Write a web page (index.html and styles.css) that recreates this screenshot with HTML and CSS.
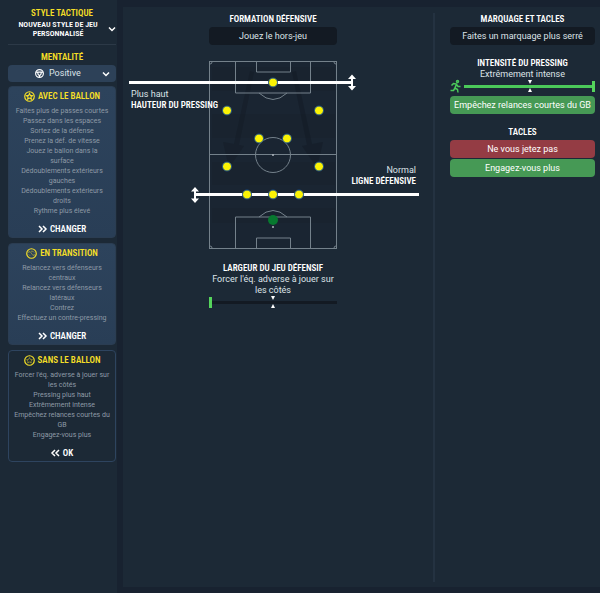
FILE: index.html
```html
<!DOCTYPE html>
<html lang="fr">
<head>
<meta charset="utf-8">
<meta name="viewport" content="width=device-width, initial-scale=1">
<title>Tactique - Sans le ballon</title>
<link rel="stylesheet" href="styles.css">
</head>
<body>
<div class="app">
  <aside class="sidebar">
    <h2 class="title accent" id="style-label">STYLE TACTIQUE</h2>
    <button class="style-picker" type="button" aria-labelledby="style-label style-value">
      <span class="title" id="style-value">NOUVEAU STYLE DE JEU PERSONNALISÉ</span>
      <svg class="chevron" viewBox="0 0 8 6" aria-hidden="true"><path d="M1 1.500 4 4.500l3-3"/></svg>
    </button>
    <label class="title accent mentality-label" for="mentality">MENTALITÉ</label>
    <div class="mentality">
      <svg class="shield" viewBox="0 0 10 10" aria-hidden="true"><circle cx="5" cy="5" r="4.3"/><path d="M1 3.500h8M3 4l.500 2L5 7.500 6.500 6 7 4M5 7.500V9"/></svg>
      <select id="mentality"><option>Positive</option></select>
      <svg class="chevron" viewBox="0 0 8 6" aria-hidden="true"><path d="M1 1.500 4 4.500l3-3"/></svg>
    </div>

    <section class="card">
      <h3 class="title accent card-title">
        <svg class="badge" viewBox="0 0 12 12" aria-hidden="true"><circle cx="6" cy="6" r="5.2"/><path d="m6 2.8 1 2 2.2.3-1.6 1.5.4 2.2-2-1.1-2 1.1.4-2.2-1.6-1.5L5 4.8z"/></svg>
        AVEC LE BALLON
      </h3>
      <ul class="notes">
        <li>Faites plus de passes courtes</li>
        <li>Passez dans les espaces</li>
        <li>Sortez de la défense</li>
        <li>Prenez la déf. de vitesse</li>
        <li>Jouez le ballon dans la surface</li>
        <li>Dédoublements extérieurs gauches</li>
        <li>Dédoublements extérieurs droits</li>
        <li>Rythme plus élevé</li>
      </ul>
      <button class="title switch" type="button">
        <svg class="arrows" viewBox="0 0 9 8" aria-hidden="true"><path d="m1 1 3 3-3 3M5 1l3 3-3 3"/></svg>
        CHANGER
      </button>
    </section>

    <section class="card">
      <h3 class="title accent card-title">
        <svg class="badge" viewBox="0 0 12 12" aria-hidden="true"><circle cx="6" cy="6" r="5.2"/><path class="dim" d="M3 5.500V4h1.500L7.500 8H9V6.500M5.500 3.500h2L9 5M3 7l1.500 1.500"/></svg>
        EN TRANSITION
      </h3>
      <ul class="notes">
        <li>Relancez vers défenseurs centraux</li>
        <li>Relancez vers défenseurs latéraux</li>
        <li>Contrez</li>
        <li>Effectuez un contre-pressing</li>
      </ul>
      <button class="title switch" type="button">
        <svg class="arrows" viewBox="0 0 9 8" aria-hidden="true"><path d="m1 1 3 3-3 3M5 1l3 3-3 3"/></svg>
        CHANGER
      </button>
    </section>

    <section class="card current">
      <h3 class="title accent card-title">
        <svg class="badge" viewBox="0 0 12 12" aria-hidden="true"><circle cx="6" cy="6" r="5.2"/><path class="dim" d="m6 2.8 1 2 2.2.3-1.6 1.5.4 2.2-2-1.1-2 1.1.4-2.2-1.6-1.5L5 4.8z"/></svg>
        SANS LE BALLON
      </h3>
      <ul class="notes">
        <li>Forcer l'éq. adverse à jouer sur les côtés</li>
        <li>Pressing plus haut</li>
        <li>Extrêmement intense</li>
        <li>Empêchez relances courtes du GB</li>
        <li>Engagez-vous plus</li>
      </ul>
      <button class="title switch" type="button">
        <svg class="arrows" viewBox="0 0 9 8" aria-hidden="true"><path d="M4 1 1 4l3 3M8 1 5 4l3 3"/></svg>
        OK
      </button>
    </section>
  </aside>

  <main class="panel">
    <section class="formation">
      <h2 class="title">FORMATION DÉFENSIVE</h2>
      <button class="option narrow" type="button">Jouez le hors-jeu</button>

      <div class="board">
        <svg class="pitch" viewBox="0 0 288 190" role="img" aria-label="Terrain">
          <rect class="grass" x="81" y="1" width="127" height="187"/>
          <g class="bands"><path d="M83 7h123v24H83zM83 54h123v24H83zM83 102h123v23H83zM83 148h123v15H83z"/></g>
          <g class="shade">
            <path d="m121 11 4 1-15 73 5 1-15 22-6-26 11 2z"/>
            <path d="m167 11-4 1 15 73-5 1 15 22 6-26-11 2z"/>
          </g>
          <g class="lines">
            <rect x="80.500" y="1.500" width="127" height="187"/>
            <path d="M81 94.500h126M106.500 2v31h75V2M127.500 2v10h34V2M106.500 188v-31h75v31M127.500 188v-10h34v10"/>
            <circle cx="144" cy="95" r="17.500"/>
            <path d="M130 33q14 13 28 0M130 157q14-13 28 0M81 4q2 0 2-2M207 4q-2 0-2-2M81 186q2 0 2 2M207 186q-2 0-2 2"/>
          </g>
          <circle class="spot" cx="144" cy="95" r="1"/>
          <circle class="spot" cx="144" cy="167" r="1"/>
          <path class="limit" d="M0 22.500h223M66 134.500h224"/>
          <path class="handle" d="M223 14.500 227 19h-3v7h3l-4 4.500-4-4.500h3v-7h-3zM66 127l4 4.500h-3v7h3L66 143l-4-4.500h3v-7h-3z"/>
          <g class="players">
            <circle cx="144" cy="22.500" r="4.500"/>
            <circle cx="98" cy="50.500" r="4.500"/><circle cx="190" cy="50.500" r="4.500"/>
            <circle cx="130" cy="78.500" r="4.500"/><circle cx="158" cy="78.500" r="4.500"/>
            <circle cx="98" cy="106.500" r="4.500"/><circle cx="190" cy="106.500" r="4.500"/>
            <circle cx="118" cy="134.500" r="4.500"/><circle cx="144" cy="134.500" r="4.500"/><circle cx="170" cy="134.500" r="4.500"/>
          </g>
          <circle class="keeper" cx="144" cy="160" r="5"/>
        </svg>
        <p class="line-label press">Plus haut<strong class="title">HAUTEUR DU PRESSING</strong></p>
        <p class="line-label back">Normal<strong class="title">LIGNE DÉFENSIVE</strong></p>
      </div>

      <div class="width-setting">
        <label class="title" for="width">LARGEUR DU JEU DÉFENSIF</label>
        <p class="value">Forcer l'éq. adverse à jouer sur les côtés</p>
        <div class="slider">
          <input id="width" type="range" min="0" max="4" value="0">
          <svg class="middle" viewBox="0 0 4 12" aria-hidden="true"><path d="M0 0h4L2 4zM0 12h4L2 8z"/></svg>
        </div>
      </div>
    </section>

    <section class="marking">
      <h2 class="title">MARQUAGE ET TACLES</h2>
      <button class="option" type="button">Faites un marquage plus serré</button>

      <div class="intensity">
        <label class="title" for="intensity">INTENSITÉ DU PRESSING</label>
        <p class="value">Extrêmement intense</p>
        <div class="meter">
          <svg class="runner" viewBox="0 0 11 13" aria-hidden="true"><circle cx="7.500" cy="1.500" r="1"/><path d="M1.500 5.500 3.500 3.500l3 .500-1.500 4 2.500 1.500.500 3M5 8 3.500 10.500H.500M6.500 4.500 8 6.500h2.500"/></svg>
          <div class="slider full">
            <input id="intensity" type="range" min="0" max="4" value="4">
            <svg class="middle" viewBox="0 0 4 12" aria-hidden="true"><path d="M0 0h4L2 4zM0 12h4L2 8z"/></svg>
          </div>
        </div>
        <button class="option on" type="button">Empêchez relances courtes du GB</button>
      </div>

      <h2 class="title">TACLES</h2>
      <div class="tackles">
        <button class="option off" type="button">Ne vous jetez pas</button>
        <button class="option on" type="button">Engagez-vous plus</button>
      </div>
    </section>
  </main>
</div>
</body>
</html>
```
FILE: styles.css
```css
* { box-sizing: border-box; }

body {
  margin: 0;
  background: #182230;
  color: #dde3e8;
  font-family: Roboto, "Liberation Sans", sans-serif;
  font-size: 9px;
  line-height: 11px;
}

h2, h3, p, ul { margin: 0; padding: 0; }
ul { list-style: none; }
button, select { font: inherit; color: inherit; border: 0; background: none; padding: 0; }
svg { display: block; flex: none; overflow: visible; }

.app {
  display: grid;
  grid-template-columns: 117px 1fr;
  column-gap: 6px;
  min-height: 100vh;
}

.title {
  display: block;
  color: #fff;
  font-family: "Roboto Condensed", "Liberation Sans Narrow", Roboto, sans-serif;
  font-size: 9px;
  font-weight: 600;
  line-height: 12px;
  text-align: center;
}
.accent { color: #f5df27; }

.sidebar {
  display: flex;
  flex-direction: column;
  padding: 7px 1px 0 8px;
  background: #1c2936;
}

.style-picker {
  display: flex;
  align-items: center;
  padding: 1px 0 6px;
  border-bottom: 1px solid #2c3947;
}
.style-picker .title { flex: 1; font-size: 8px; line-height: 9px; }
.chevron { width: 8px; height: 6px; fill: none; stroke: #fff; stroke-width: 1.500; }

.mentality-label { margin-top: 6px; }

.mentality { position: relative; margin: 2px 0 4px; }
.mentality select {
  appearance: none;
  display: block;
  width: 100%;
  height: 17px;
  padding: 0 24px 0 41px;
  border-radius: 4px;
  background: #2d4158;
}
.mentality .shield { position: absolute; left: 27px; top: 4px; width: 9px; height: 9px; fill: none; stroke: #fff; stroke-width: 1.300; }
.mentality .chevron { position: absolute; right: 6px; top: 6px; }

.card {
  margin-bottom: 5px;
  padding: 3px 2px 2px;
  border: 1px solid #2b3d52;
  border-radius: 4px;
  background: linear-gradient(#2d435c, #293e56);
}
.card.current { background: #1c2936; border-color: #2e445f; }
.card-title { display: flex; justify-content: center; align-items: center; gap: 3px; }
.badge { width: 11px; height: 11px; fill: none; stroke: #f5df27; stroke-width: 1.300; }
.badge .dim { stroke-width: 1; opacity: 0.5; }

.notes {
  padding: 4px 4px 6px;
  color: #8e9aa6;
  font-size: 7px;
  line-height: 10px;
  text-align: center;
}
.current .notes { padding-inline: 1px; }

.switch { display: flex; justify-content: center; align-items: center; gap: 3px; width: 100%; height: 13px; }
.arrows { width: 9px; height: 8px; fill: none; stroke: #fff; stroke-width: 1.500; }

.panel {
  display: grid;
  grid-template-columns: 310fr 167fr;
  margin: 7px 0 6px;
  background: #1c2936;
}

.formation {
  display: flex;
  flex-direction: column;
  align-items: center;
  padding: 6px 16px 0 6px;
}
.marking {
  margin: 6px 0 5px;
  padding: 0 5px 0 15px;
  border-left: 2px solid #243241;
}

.option {
  display: block;
  width: 100%;
  height: 18px;
  margin-top: 2px;
  border-radius: 4px;
  background: #131a23;
  text-align: center;
}
.option.narrow { width: 128px; }
.option.on { background: #469955; color: #fff; }
.option.off { background: #943c44; color: #fff; }

.board { position: relative; width: 288px; margin-top: 15px; }
.pitch { width: 288px; height: 190px; }
.grass { fill: #1a2532; }
.bands { fill: #18212c; opacity: 0.5; }
.shade { fill: #131b25; opacity: 0.5; }
.lines { fill: none; stroke: #74818b; stroke-width: 1; }
.spot { fill: #aeb6bc; }
.limit { stroke: #fff; stroke-width: 3; }
.handle { fill: #fff; }
.players { fill: #fbf305; stroke: #174d8c; stroke-width: 1; }
.keeper { fill: #07792f; }

.line-label { position: absolute; }
.press { left: 2px; top: 29px; }
.back { right: 1px; top: 105px; text-align: right; }
.line-label .title { line-height: 11px; }

.width-setting { width: 128px; margin-top: 12px; text-align: center; }
.value { text-align: center; }

.slider { position: relative; flex: 1; height: 13px; }
.slider input {
  appearance: none;
  display: block;
  width: 100%;
  height: 12px;
  margin: 0;
  background: linear-gradient(#131a23, #131a23) center / 100% 3px no-repeat;
}
.slider.full input { background-image: linear-gradient(#4bc95a, #4bc95a); }
.slider input::-webkit-slider-thumb { appearance: none; width: 3px; height: 11px; background: #55d45c; }
.slider input::-moz-range-thumb { width: 3px; height: 11px; border: 0; border-radius: 0; background: #55d45c; }
.middle { position: absolute; left: calc(50% - 2px); top: 0; width: 4px; height: 12px; fill: #fff; pointer-events: none; }

.intensity { margin: 12px 0; }
.meter { display: flex; gap: 3px; }
.runner { width: 11px; height: 13px; fill: none; stroke: #4bc95a; stroke-width: 1.500; }
.intensity .option { margin-top: 3px; }
.tackles { display: grid; gap: 1px; margin-top: 2px; }
.tackles .option { margin-top: 0; }
```
